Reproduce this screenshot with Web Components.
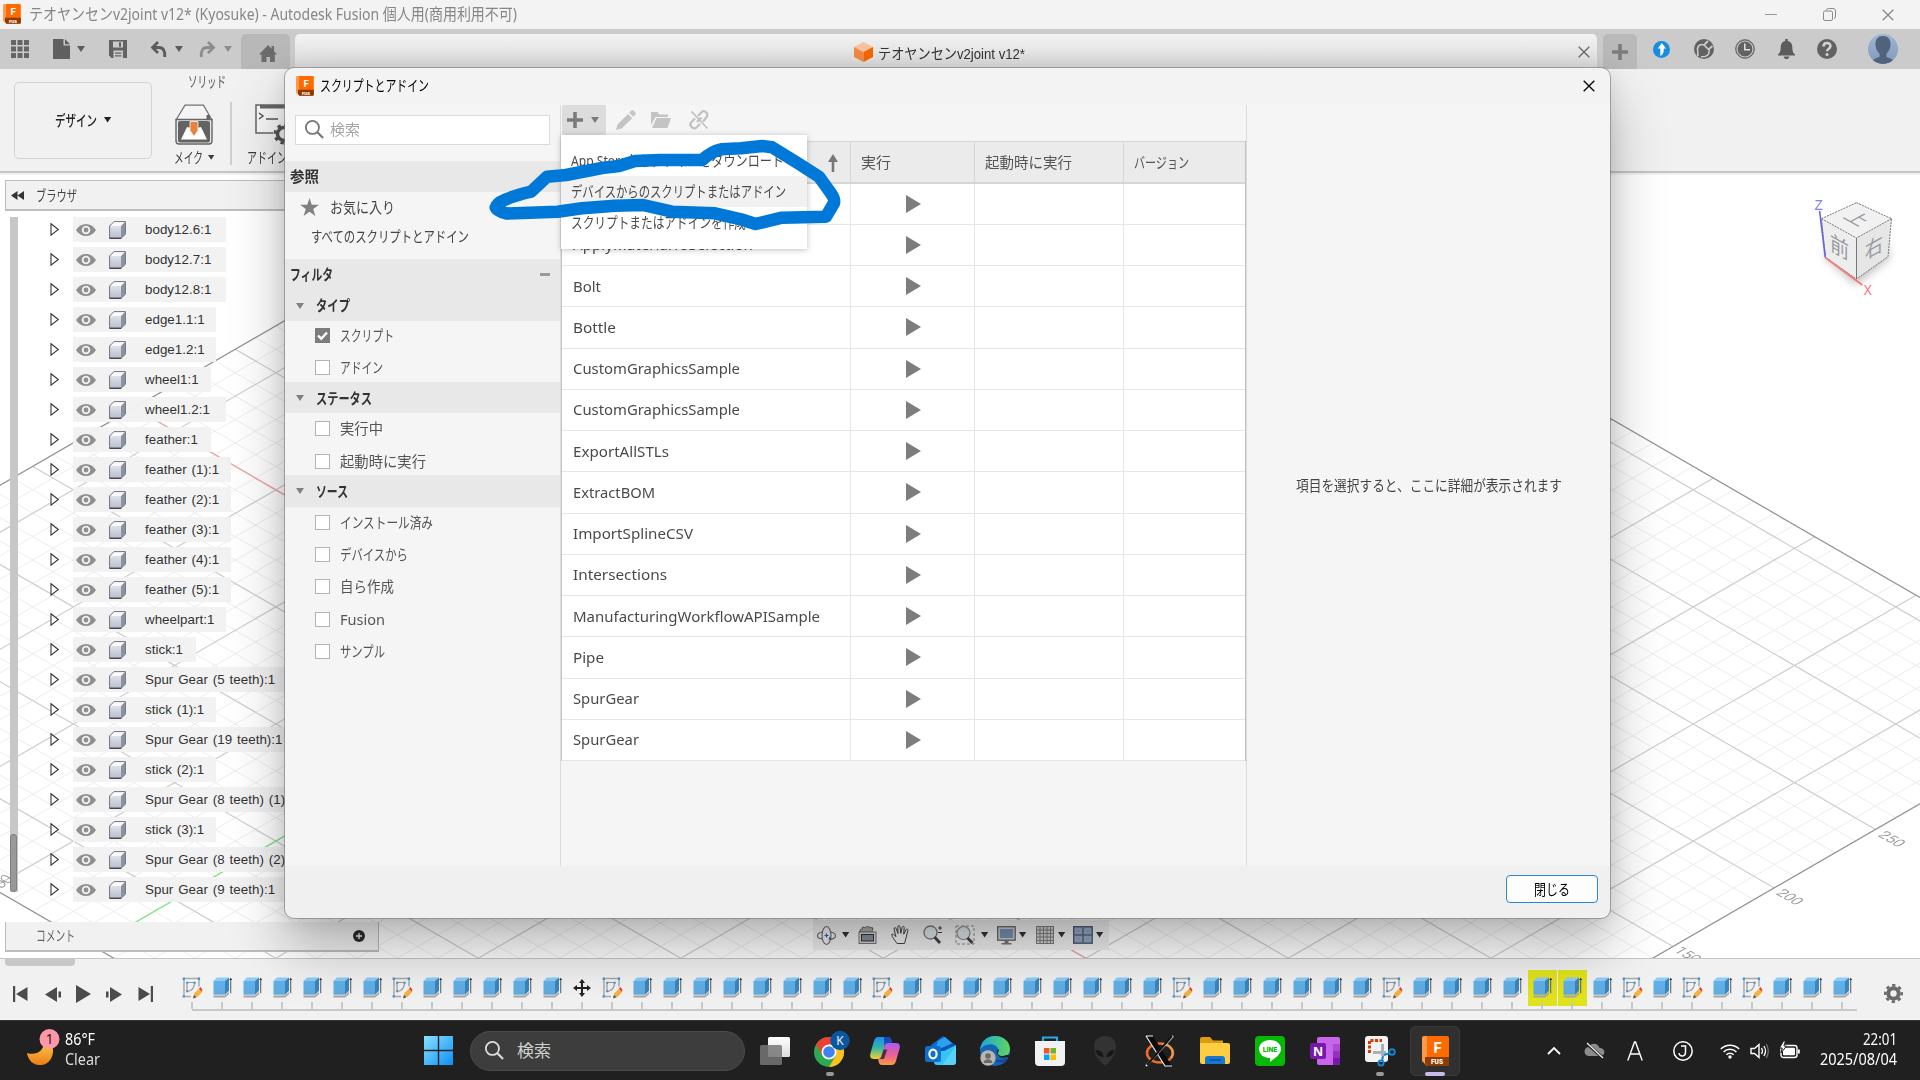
<!DOCTYPE html>
<html lang="ja">
<head>
<meta charset="utf-8">
<title>Fusion</title>
<style>
html,body{margin:0;padding:0;width:1920px;height:1080px;overflow:hidden;background:#fff}
body{font-family:"Noto Sans","Noto Sans CJK JP",sans-serif;font-size:15px;line-height:1;color:#3c3c3c}
</style>
</head>
<body>
<fusion-app></fusion-app>
<script>
const K = 0.5783;
const base = '*{box-sizing:border-box}:host{display:block}';
function define(name, css, html, after) {
  customElements.define(name, class extends HTMLElement {
    connectedCallback() {
      if (this.shadowRoot) return;
      const r = this.attachShadow({mode: 'open'});
      r.innerHTML = '<style>' + base + css + '</style>' + (typeof html === 'function' ? html(this) : html);
      if (after) after(this, r);
    }
  });
}

/* Label squeezed or stretched horizontally to the width in its "w" attribute. */
define('ui-label', ':host{display:inline-block;white-space:nowrap;flex:none}span{display:inline-block;transform-origin:0 50%}',
  '<span><slot></slot></span>', (el, r) => {
    const w = +el.getAttribute('w'), s = r.querySelector('span');
    if (!w) return;
    const n = s.getBoundingClientRect().width;
    el.style.width = w + 'px';
    if (n) s.style.transform = 'scaleX(' + (w / n) + ')';
  });

const fusion = `<defs><linearGradient id="f" x2="1"><stop offset="0" stop-color="#ff9a4a"/><stop offset=".17" stop-color="#ff9a4a"/><stop offset=".17" stop-color="#ff6b00"/></linearGradient></defs>`;
const I = {
  fusion: [27, 30, fusion + `<path d="M2 0h23a2 2 0 0 1 2 2v26a2 2 0 0 1-2 2H5L0 25V2a2 2 0 0 1 2-2z" fill="url(#f)"/><path d="M3 21h24v7a2 2 0 0 1-2 2H5l-2-3z" fill="#8f3a00"/><text x="15.5" y="16.5" text-anchor="middle" font-family="Roboto" font-weight="700" font-size="15" fill="#fff">F</text><text x="15" y="28.2" text-anchor="middle" font-family="Roboto" font-weight="900" font-size="6.6" fill="#fff">FUS</text>`],
  grid: [18, 18, [0,6.5,13].map(x=>[0,6.5,13].map(y=>`<rect x="${x}" y="${y}" width="5" height="5" fill="#666"/>`).join('')).join('')],
  file: [17, 20, `<path d="M0 0h10.5v6.500H17V20H0z" fill="#5f5f5f"/><path d="M12 0l5 5.200h-5z" fill="#5f5f5f"/>`],
  caret: [8, 6, `<path d="M0 0h8L4 6z" fill="currentColor"/>`],
  save: [18, 18, `<path d="M0 0h18v18H2.500L0 15.500z" fill="#636363"/><path d="M4 1.500h10v6H4zM4.500 10.500h9.500V18H4.500z" fill="#cbcbcb"/><path d="M10 2.200h2v4.500h-2zM6 12.500h6.500v1.300H6zM6 15.200h6.500v1.300H6z" fill="#636363"/>`],
  undo: [16, 17, `<path d="M7 1L1.500 6.500 7 12M2 6.500h6c4.500 0 6 3.500 5.800 9.500" fill="none" stroke="currentColor" stroke-width="2.800"/>`],
  redo: [16, 17, `<path d="M9 1l5.500 5.500L9 12M14 6.500H8c-4.500 0-6 3.500-5.800 9.500" fill="none" stroke="currentColor" stroke-width="2.800"/>`],
  home: [18, 17, `<path d="M9 0l3.500 3.500V1H15v5l3 3.500h-2.200V17H11v-5H7.500v5H2.500V9.500H0z" fill="#6c6c6c"/>`],
  dcube: [19, 20, `<path d="M9.500 0L19 5 9.500 10 0 5z" fill="#f9c3a0"/><path d="M0 5l9.500 5v10L0 15z" fill="#f38a44"/><path d="M19 5l-9.500 5v10L19 15z" fill="#f56600"/>`],
  x: [12, 12, `<path d="M.7.700l10.600 10.600M11.300.700L.7 11.300" stroke="currentColor" stroke-width="1.300" fill="none"/>`],
  min: [12, 12, `<path d="M0 5.500h12" stroke="#999" stroke-width="1"/>`],
  max: [13, 13, `<rect x=".5" y="3" width="9" height="9.500" rx="1.500" fill="none" stroke="#8a8a8a"/><path d="M3.500 2.500a2 2 0 0 1 2-2h4.500a2.500 2.500 0 0 1 2.500 2.500V9a2 2 0 0 1-1.500 1.500" fill="none" stroke="#8a8a8a"/>`],
  plus: [16, 16, `<path d="M6.200 0h3.600v6.200H16v3.600H9.800V16H6.200V9.800H0V6.200h6.200z" fill="currentColor"/>`],
  up: [17, 17, `<circle cx="8.500" cy="8.500" r="8.500" fill="#148de3"/><path d="M8.800 2L13 7.500h-2.300c.3 3.500-.5 6-3.200 7.500-.5-2 .1-4.500-.2-7.500H4.800z" fill="#fff"/>`],
  ext: [20, 20, `<circle cx="10" cy="10" r="10" fill="#626262"/><path d="M4 17L3.500 9.500C4 6.500 7 4.500 10 6l5 5c.8 3-1 6-4 6.500l-4 .3" fill="none" stroke="#cbcbcb" stroke-width="1.600"/><path d="M10.500 5.500L14 2M14.500 10.500L18.500 7" stroke="#cbcbcb" stroke-width="1.800"/><path d="M9.500 7.500l5 4.500-3.500 3.500z" fill="#626262"/>`],
  clock: [20, 20, `<circle cx="10" cy="10" r="9.300" fill="#626262" stroke="#626262"/><circle cx="10" cy="10" r="8" fill="none" stroke="#cbcbcb" stroke-width="1.200"/><path d="M9.800 4.500v6.200H15" fill="none" stroke="#e2e2e2" stroke-width="1.500"/>`],
  bell: [17, 20, `<path d="M7.200 0h2.600v2c3 .6 4.500 3 4.500 6 0 4 .8 6 2.700 7.500v1H0v-1C1.900 14 2.700 12 2.700 8c0-3 1.500-5.400 4.500-6zM5.500 17.500h6L10 20H7z" fill="#5c5c5c"/>`],
  help: [20, 20, `<circle cx="10" cy="10" r="10" fill="#626262"/><path d="M6.500 7.500c0-4.500 7-4.500 7-.4 0 2.600-3.400 2.500-3.400 5.200" fill="none" stroke="#d4d4d4" stroke-width="2.500"/><circle cx="10" cy="15.500" r="1.500" fill="#d4d4d4"/>`],
  avatar: [30, 30, `<defs><linearGradient id="a" y2="1" x2="0"><stop stop-color="#9fb5d3"/><stop offset="1" stop-color="#8299bd"/></linearGradient><clipPath id="c"><circle cx="15" cy="15" r="15"/></clipPath></defs><g clip-path="url(#c)"><rect width="30" height="30" fill="url(#a)"/><path d="M15 2c5 0 7.500 3 7.500 8s-2 7.500-4 9.500v3.500c4 1.500 6.500 2 7.500 5v4H4v-4c1-3 3.500-3.500 7.500-5v-3.500c-2-2-4-4.500-4-9.500s2.500-8 7.500-8z" fill="#51627b"/></g>`],
  make: [38, 41, `<path d="M1 16L10 1.200h18.500L37 16" fill="#f4f4f4" stroke="#707070" stroke-width="1.200"/><path d="M1 15.500h36V37a3 3 0 0 1-3 3H4a3 3 0 0 1-3-3z" fill="#e6e6e6" stroke="#666" stroke-width="1.400"/><rect x="3" y="17" width="32" height="21.500" rx="2" fill="#636363"/><path d="M6 35.500L12 23l4 1 3 4 3-4 4-1 6 12.500z" fill="#fff"/><path d="M15 17.500h8v9l-4 6-4-6z" fill="#e8833a" stroke="#fff" stroke-width=".8"/><rect x="31.500" y="11" width="3.500" height="4" fill="#666"/>`],
  addin: [44, 40, `<path d="M17 29H1V1h40v20" fill="#f7f7f7" stroke="#666" stroke-width="1.500"/><path d="M5 1h36v3.500H5z" fill="#666"/><path d="M4 9l4 3-4 3M11 15h12" fill="none" stroke="#555" stroke-width="1.500"/><path d="M15 29h3" stroke="#888" stroke-width="2"/><circle cx="29" cy="30" r="6.500" fill="none" stroke="#555" stroke-width="3.500"/><circle cx="29" cy="30" r="9" fill="none" stroke="#555" stroke-width="3" stroke-dasharray="3.500 3.570"/>`],
  rew: [13, 9, `<path d="M6.500 0v9L0 4.500zM13 0v9L6.500 4.500z" fill="#333"/>`],
  tri: [9, 13, `<path d="M1 .8L8.300 6.500 1 12.200z" fill="#fff" stroke="#333" stroke-width="1.100"/>`],
  eye: [20, 12, `<path d="M0 6C5-2 15-2 20 6 15 14 5 14 0 6z" fill="#8f8f8f"/><circle cx="10" cy="6" r="4.300" fill="#f1f1f1"/><circle cx="10" cy="6" r="2.400" fill="#909090"/>`],
  body: [17, 18, `<defs><linearGradient id="b" y2="1" x2="0"><stop stop-color="#dde1ea"/><stop offset="1" stop-color="#b9bfce"/></linearGradient></defs><path d="M.6 5L5 .6h11.400v12.600L12 17.300H.6z" fill="#8b93a3"/><path d="M.6 5L5 .6h11.400L12 5z" fill="#fbfbfc"/><path d="M.6 5H12v12H.6z" fill="url(#b)"/><path d="M.6 5v12.300H12l4.400-4.100V.6H5z" fill="none" stroke="#72757d" stroke-width="1"/><path d="M.6 17.300h11.600" stroke="#42444a" stroke-width="1.300"/>`],
  cplus: [12, 12, `<circle cx="6" cy="6" r="6" fill="#2e2e2e"/><path d="M6 3v6M3 6h6" stroke="#eee" stroke-width="1.300"/>`],
  first: [15, 16, `<path d="M0 0h2.200v16H0zM14.500 1v14L3 8z" fill="#4b4b4b"/>`],
  prev: [16, 15, `<path d="M12 0v15L0 7.500zM13.500 4.500H16v6h-2.500z" fill="#4b4b4b"/>`],
  play: [15, 18, `<path d="M0 0l15 9-15 9z" fill="#4b4b4b"/>`],
  next: [16, 15, `<path d="M4 0v15l12-7.500zM0 4.500h2.500v6H0z" fill="#4b4b4b"/>`],
  last: [15, 16, `<path d="M12.800 0H15v16h-2.200zM.5 1v14L12 8z" fill="#4b4b4b"/>`],
  extrude: [19, 21, `<defs><linearGradient id="e" y2="1" x2="0"><stop stop-color="#5fb1ea"/><stop offset="1" stop-color="#62aade"/></linearGradient></defs><path d="M.5 18.500h11.500l4-3.500v2.200l-4 3.300H.5z" fill="#a5a5a5"/><path d="M.5 4L4 .5h12L12 4z" fill="#8dcbf8"/><path d="M.5 4H12v13.700H.5z" fill="url(#e)"/><path d="M12 4L16 .5v13.200l-4 4z" fill="#3a86bf"/><path d="M17.700 2.500v13.800" stroke="#666" stroke-width="1.100"/><path d="M16.200 3L17.700.8 19.200 3z" fill="#333"/>`],
  sketch: [20, 22, `<path d="M2 1.500h15v8M2 1.500v18h7" fill="none" stroke="#a9a9a9" stroke-width="1.500"/><path d="M5 5.500h7.500C12.500 10 11 13.500 5.500 14.500M5 5.500v9" fill="none" stroke="#999" stroke-width="1.200"/><g fill="#3f96da"><path d="M.6.600h2.300v2.300H.6zM15.800.600h2.300v2.300h-2.300zM.6 18.300h2.300v2.300H.6zM4.200 4.700h2v2h-2zM11.700 4.700h2v2h-2zM4.200 13.200h2v2h-2z"/></g><path d="M11 21l1.500-5 5-4.500 3 3-4.500 5z" fill="#f5b141"/><path d="M17 11.500l1.500-1.500 2 3-1 1.500z" fill="#e63946"/><path d="M11 21.500l1-3.500 2.500 2.300z" fill="#555"/>`],
  move: [18, 18, `<path d="M9 0l3 4h-2v4h4V6l4 3-4 3v-2h-4v4h2l-3 4-3-4h2v-4H4v2L0 9l4-3v2h4V4H6z" fill="#222"/>`],
  gear: [19, 19, `<circle cx="9.500" cy="9.500" r="5.200" fill="none" stroke="#6b6b6b" stroke-width="4"/><circle cx="9.500" cy="9.500" r="8.200" fill="none" stroke="#6b6b6b" stroke-width="2.600" stroke-dasharray="3.300 3.140" stroke-dashoffset="1.600"/>`],
  orbit: [19, 19, `<ellipse cx="9.500" cy="9.500" rx="4.500" ry="9" fill="none" stroke="#666" stroke-width="1.100"/><path d="M5 6C-1 7.500-1 12 5 13M14 6c6 1.500 6 6 0 7.200" fill="none" stroke="#666" stroke-width="1.100"/><path d="M12.500 10.500l-1 3 3.500.5z" fill="#555"/><path d="M9.500 7.500v4M7.500 9.500h4" stroke="#1d62d0" stroke-width="1.200"/>`],
  look: [19, 18, `<path d="M1.500 6l1-2.500L4 3l.5-2 3 .5 1-1L15 2l-1 4z" fill="#aaa" stroke="#666"/><rect x="1" y="6" width="17" height="11.500" fill="#d5d5d5" stroke="#777"/><rect x="3.500" y="8.500" width="12" height="6.500" fill="#8490a0" stroke="#333"/>`],
  hand: [19, 20, `<path d="M6 18.500C4 15.500 1 12 .7 9.500c.8-1 2.300-.2 4.200 2.200L3 3.800c0-1.600 1.700-1.600 2.200 0L7 8.500 6.800 1.800c.2-1.600 2-1.600 2.200 0l.8 6.500 1.400-6c.6-1.500 2.100-1.200 2 .4l-.5 6.500 2.200-4.500c.9-1.200 2.300-.5 1.900.9-1 4-1.800 8.400-3.300 12.900z" fill="#f2f2f2" stroke="#444" stroke-width="1"/>`],
  zoom: [20, 20, `<circle cx="7.500" cy="7.500" r="6.500" fill="#dfe7e9" stroke="#777" stroke-width="1.300"/><path d="M11.500 12l5.500 6" stroke="#444" stroke-width="3"/><path d="M15 3h4M17 1v4M15 7.500h4" stroke="#444"/>`],
  zoomw: [21, 21, `<rect x="1" y="1" width="18" height="18" fill="none" stroke="#888" stroke-dasharray="3 2"/><circle cx="8.500" cy="8" r="6.500" fill="#dfe7e9" stroke="#888" stroke-width="1.200"/><path d="M12.500 13l5 5" stroke="#444" stroke-width="3"/>`],
  monitor: [19, 19, `<rect x=".7" y=".7" width="17.500" height="13.500" fill="#ccc" stroke="#666" stroke-width="1.300"/><rect x="3" y="3" width="13" height="9" fill="#7791b3"/><path d="M7.500 14.500h4V17h3v1.500h-10V17h3z" fill="#777"/>`],
  gridv: [18, 18, `<rect width="18" height="18" fill="#d0d0d0"/><path d="M.5 0v18M4 0v18M7.500 0v18M11 0v18M14.500 0v18M17.500 0v18M0 .5h18M0 4h18M0 7.500h18M0 11h18M0 14.500h18M0 17.500h18" stroke="#777" stroke-width=".9"/>`],
  views: [20, 18, `<rect x=".7" y=".7" width="18.500" height="16.500" fill="#8ba0bd" stroke="#4e5a70" stroke-width="1.400"/><path d="M10 0v18M0 9h20" stroke="#5e6a80" stroke-width="1.500"/><path d="M2.500 3h5.500v4H2.500zM12 3h5.500v4H12zM2.500 11h5.500v4H2.500zM12 11h5.500v4H12z" fill="none" stroke="#a5b6d0" stroke-width=".8"/>`],
  search: [20, 20, `<circle cx="7.800" cy="7.800" r="6.900" fill="none" stroke="currentColor" stroke-width="1.900"/><path d="M13 13l6 6" stroke="currentColor" stroke-width="2.300"/>`],
  star: [19, 18, `<path d="M9.500 0l2.300 6.800H19l-5.800 4.300 2.200 6.900-5.900-4.200L3.600 18l2.200-6.900L0 6.800h7.200z" fill="#808080"/>`],
  pencil: [20, 20, `<path d="M0 20l1.600-5.600L12 4l4.200 4.200L5.600 18.500zM13.200 2.800L15.400.6q1-1 2 0l2 2q1 1 0 2l-2 2.200z" fill="#c4c4c4"/>`],
  folder: [20, 16, `<path d="M0 0h6.500l2 2.500H17V5H4.500L0 13z" fill="#c4c4c4"/><path d="M5.500 6H20l-3.500 10H1z" fill="#c4c4c4"/>`],
  unlink: [20, 20, `<g fill="none" stroke="#c0c0c0" stroke-width="2.200"><path d="M9 6l3.500-3.800c3-2.700 7.700 1.500 5 5L14 11.500M6 8.500L2.300 12.300c-2.800 3 1.800 8 5.200 5.200l3.500-3.800M8 12l4.500-4.500"/></g><path d="M2.500 1.500l16 17" stroke="#c0c0c0" stroke-width="1.700"/>`],
  arrow: [10, 18, `<path d="M5 0l5 8H6.300v10H3.700V8H0z" fill="#777"/>`],
  run: [15, 18, `<path d="M0 0l15 9-15 9z" fill="#7d7d7d"/>`],
  check: [15, 15, `<rect width="15" height="15" fill="#7c7c7c"/><path d="M3 7.500l3.200 3.200L12 4.500" fill="none" stroke="#fff" stroke-width="2.400"/>`],
  box: [15, 15, `<rect x=".5" y=".5" width="14" height="14" fill="#fff" stroke="#b3b3b3"/>`],
  moon: [34, 38, `<defs><linearGradient id="m" y2="1" x2="0"><stop stop-color="#fcd34a"/><stop offset="1" stop-color="#ee7b17"/></linearGradient></defs><path d="M22 11C31 22 24 37 12 36 6 36 1 31 0 24c9 3 18-2 17-13z" fill="url(#m)"/><circle cx="22.500" cy="10" r="10" fill="#ff98a6"/><text x="22.500" y="14.800" text-anchor="middle" font-family="Noto Sans" font-size="13.500" fill="#1c1c1c">1</text>`],
  win: [29, 29, `<defs><linearGradient id="w" x2="1" y2="1"><stop stop-color="#8be0ff"/><stop offset="1" stop-color="#0a91f5"/></linearGradient></defs><path d="M0 0h13.800v13.800H0zM15.200 0H29v13.800H15.200zM0 15.200h13.800V29H0zM15.200 15.200H29V29H15.200z" fill="url(#w)"/>`],
  task: [30, 28, `<defs><linearGradient id="t" y2="1" x2="0"><stop stop-color="#fff"/><stop offset="1" stop-color="#ddd"/></linearGradient></defs><rect x="8" width="22" height="20" rx="1.500" fill="url(#t)"/><rect y="8" width="22" height="20" rx="1.500" fill="#777" opacity=".85"/>`],
  chrome: [32, 36, `<g transform="translate(0 4)"><circle cx="15" cy="15" r="15" fill="#2da94f"/><path d="M15 15L2 7.500A15 15 0 0 1 28 7.500H15z" fill="#ea4335"/><path d="M15 30A15 15 0 0 0 28 7.500H15L21.500 19z" fill="#fcc31e"/><path d="M2 7.500L8.500 19 15 15z" fill="#ea4335"/><circle cx="15" cy="15" r="7.500" fill="#fff"/><circle cx="15" cy="15" r="5.800" fill="#3f83f1"/></g><circle cx="26" cy="7.500" r="9.700" fill="#0b579f"/><text x="26" y="12" text-anchor="middle" font-family="Noto Sans" font-size="12" fill="#e8eef6">K</text>`],
  copilot: [30, 28, `<defs><linearGradient id="p" y2="1" x2="0"><stop stop-color="#1d8bf0"/><stop offset=".5" stop-color="#35b8a6"/><stop offset="1" stop-color="#f6d02e"/></linearGradient><linearGradient id="q" y2="1" x2="0"><stop stop-color="#a75cf0"/><stop offset=".55" stop-color="#ec5f98"/><stop offset="1" stop-color="#fb9b3c"/></linearGradient></defs><path d="M8 0h10q2.500 0 3.200 2.500L22 6h-4q-2 0-2.700 2l-4 12q-.8 2-3 2H4C0 22-.3 19 .5 16L4 4Q5.200 0 8 0z" fill="url(#p)"/><path d="M14 0h4.500q2 0 2.700 2.500L22.300 6H18q-2 0-2.700 2l-.8 2z" fill="#1749b8"/><path d="M22 28H12q-2.500 0-3.200-2.500L8 22q2.500 0 3.300-2.200L15 8q.7-2 3-2h8c4 0 4.300 3 3.500 6L26 24q-1.200 4-4 4z" fill="url(#q)"/><path d="M13.500 12.500h3.700L14 22H9.500q1.200-.6 1.800-2.200z" fill="#202020" opacity=".75"/>`],
  outlook: [31, 30, `<path d="M6 9L18 0l12 9v4l-6 9-14-3z" fill="#1067c9"/><path d="M13 5L20 1l10 9-12 9-8-4z" fill="#2ba1ee"/><path d="M12 14L28 7l3 3-13 9z" fill="#0a55b3"/><path d="M11 15h8l12-6v17a3 3 0 0 1-3 3H12a3 3 0 0 1-3-3z" fill="#35c4f4"/><path d="M31 10v16a3 3 0 0 1-3 3H17z" fill="#6fdcf9" opacity=".6"/><rect y="10" width="16" height="16" rx="2.500" fill="#0f6fd0"/><ellipse cx="8" cy="18" rx="3.600" ry="4.300" fill="none" stroke="#fff" stroke-width="2.200"/>`],
  edge: [30, 30, `<defs><linearGradient id="g" x2="1"><stop stop-color="#1ba5e2"/><stop offset="1" stop-color="#5fd65b"/></linearGradient></defs><circle cx="15" cy="15" r="15" fill="#1565b4"/><path d="M0 14C1 5 7 0 15 0c9 0 15 6 15 13 0 5-4 8-8 8-3 0-5-1-5-3 0-1 2-2 1-5C16 6 4 7 0 14z" fill="url(#g)"/><path d="M14 11c-5 5-1 13 5 13 4 0 8-2 10-4-1 2-3 5-5 7-4-1-7 0-10-3-4-4-4-10 0-13z" fill="#154b8c"/><path d="M19 13c0 3-2 4-1 5 1 2 5 3 8 1l4 0v4l-3-2c-5 2-9 0-10-3-1-2 0-4 2-5z" fill="#202020"/><circle cx="8" cy="22" r="7.700" fill="#b9b5b0"/><circle cx="8" cy="20" r="2.800" fill="#6b6865"/><path d="M3.500 27c0-5 9-5 9 0z" fill="#6b6865"/>`],
  store: [30, 30, `<path d="M8 7V1.500h14V7" fill="none" stroke="#28a8ea" stroke-width="2.200"/><path d="M0 5h30v21a4 4 0 0 1-4 4H4a4 4 0 0 1-4-4z" fill="#f2f2f2"/><path d="M9 12h5.500v5.500H9z" fill="#f35325"/><path d="M15.500 12H21v5.500h-5.500z" fill="#6fb52c"/><path d="M9 18.500h5.500V24H9z" fill="#05a6f0"/><path d="M15.500 18.500H21V24h-5.500z" fill="#ffba08"/>`],
  alien: [22, 30, `<path d="M11 0c7 0 11 4 11 11 0 8-6 15-11 19C6 26 0 19 0 11 0 4 4 0 11 0z" fill="#333"/><path d="M1.500 14c5 0 8 3 8 7-4 0-7-2-8-7zM20.500 14c-5 0-8 3-8 7 4 0 7-2 8-7z" fill="#161616"/>`],
  xapp: [30, 30, `<ellipse cx="15" cy="17" rx="13" ry="9.500" fill="none" stroke="#ef6a24" stroke-width="2.600"/><path d="M17 8c9 0 13 8 9 14" fill="none" stroke="#d9a35c" stroke-width="2"/><path d="M1 0h7l19 30h-7z" fill="#0c0c0c"/><path d="M1 0h7M1 0l19 30h7" fill="none" stroke="#eee" stroke-width="1.200"/><path d="M28 0L1 30" stroke="#eee" stroke-width="2"/><path d="M27 0L2 29" stroke="#111" stroke-width="2"/>`],
  explorer: [30, 27, `<path d="M0 2a2 2 0 0 1 2-2h8l3 3.500h10V8H0z" fill="#dd9b10"/><path d="M0 6h28a2 2 0 0 1 2 2v17a2 2 0 0 1-2 2H2a2 2 0 0 1-2-2z" fill="#ffcd41"/><path d="M5 27v-5a3 3 0 0 1 3-3h14a3 3 0 0 1 3 3v5z" fill="#1577cf"/><path d="M9 23h12" stroke="#0b4f97" stroke-width="1.500"/>`],
  line: [30, 30, `<rect width="30" height="30" rx="4" fill="#06b906"/><path d="M15 4c6.500 0 11 4 11 9 0 6-7 9.500-11 13v-4C8.500 22 4 18 4 13s4.500-9 11-9z" fill="#fff"/><text x="15" y="16" text-anchor="middle" font-family="Roboto" font-weight="900" font-size="6.800" fill="#06b906">LINE</text>`],
  note: [30, 28, `<rect x="7" width="23" height="28" rx="2" fill="#ca64ea"/><path d="M23 7h7v7h-7z" fill="#ae4bd5"/><path d="M23 14h7v7h-7z" fill="#9332bf"/><path d="M23 21h7v5a2 2 0 0 1-2 2h-5z" fill="#7719aa"/><rect y="6" width="16" height="16" rx="2" fill="#7719aa"/><text x="8" y="18.500" text-anchor="middle" font-family="Noto Sans" font-weight="700" font-size="12.500" fill="#fff">N</text>`],
  snip: [30, 30, `<rect width="23" height="26" rx="3" fill="#f3f3f3"/><path d="M4.500 17V4.500H17" fill="none" stroke="#d83b01" stroke-width="3" stroke-dasharray="3 1.500"/><path d="M17.500 8v12M8 16.500h13" stroke="#a9b2bb" stroke-width="3"/><path d="M19 19l6-2M18 20l-1 5" stroke="#1684ce" stroke-width="2"/><circle cx="27" cy="16" r="2.800" fill="none" stroke="#1684ce" stroke-width="2"/><circle cx="16" cy="27" r="2.600" fill="none" stroke="#1684ce" stroke-width="2"/>`],
  chev: [14, 8, `<path d="M1 7l6-6 6 6" fill="none" stroke="#fff" stroke-width="1.800"/>`],
  cloud: [21, 17, `<path d="M5 14a4.500 4.500 0 0 1 0-9C7 .5 14 .5 15.500 6 22 6 22 14 16 14z" fill="#8b8b8b"/><path d="M2 1l17 15" stroke="#202020" stroke-width="3"/><path d="M3 1l16 15" stroke="#eee" stroke-width="1.300"/>`],
  ime: [16, 20, `<path d="M.8 19.500L7.500 1h1l6.700 18.500M3.200 13h9.600" fill="none" stroke="#fff" stroke-width="1.400"/>`],
  jime: [20, 20, `<circle cx="10" cy="10" r="9.200" fill="none" stroke="#fff" stroke-width="1.500"/><path d="M8 5h4.500v6c0 5-6 5.500-6.500 1" fill="none" stroke="#fff" stroke-width="1.500"/>`],
  wifi: [20, 16, `<g fill="none" stroke="#fff" stroke-width="1.500"><path d="M.8 6a13 13 0 0 1 18.400 0M3.600 9a9 9 0 0 1 12.800 0M6.400 11.700a5 5 0 0 1 7.200 0"/></g><circle cx="10" cy="14" r="1.700" fill="#fff"/>`],
  vol: [19, 16, `<path d="M1 5.500h3.500L9 1.500v13l-4.500-4H1z" fill="none" stroke="#fff" stroke-width="1.400"/><path d="M11.500 5q2 3 0 6M13.800 3q3.500 5 0 10" fill="none" stroke="#fff" stroke-width="1.300"/><path d="M16.300 1q4 7 0 14" fill="none" stroke="#777" stroke-width="1.200"/>`],
  bat: [20, 17, `<rect x="1" y="3.500" width="16" height="12" rx="2.500" fill="none" stroke="#fff" stroke-width="1.400"/><rect x="3" y="5.700" width="12" height="7.600" rx="1" fill="#fff"/><path d="M18 7.500h1.800v4H18z" fill="#fff"/><path d="M3.500-1L-.5 6h2.800L1 11l5.500-7H3.900L5.500-1z" fill="#fff" stroke="#202020" stroke-width="1"/>`],
  minus: [10, 3, `<path d="M0 0h10v3H0z" fill="#999"/>`]
};
/* Icon: "n" names the drawing, "s" scales it, "g" is the gap to its left. */
define('ui-icon', ':host{display:block;flex:none}svg{display:block;overflow:visible}', el => {
  const [w, h, b] = I[el.getAttribute('n')], s = +(el.getAttribute('s') || 1);
  return `<style>:host{margin-left:${el.getAttribute('g') || 0}px}</style><svg width="${w*s}" height="${h*s}" viewBox="0 0 ${w} ${h}">${b}</svg>`;
});

define('title-bar', `:host{height:29px;background:#f3f3f3;display:flex;align-items:center;padding-left:3px;color:#868686;font-size:16px}
  ui-label{margin-left:8px;margin-top:-1px}.sp{flex:1}`,
  `<ui-icon n="fusion" s=".66" style="margin-top:-1px"></ui-icon><ui-label w="488">テオヤンセンv2joint v12* (Kyosuke) - Autodesk Fusion 個人用(商用利用不可)</ui-label>
   <div class="sp"></div><ui-icon n="min"></ui-icon><ui-icon n="max" g="46"></ui-icon><ui-icon n="x" g="46" style="color:#888"></ui-icon><div style="width:26px"></div>`);

define('quick-bar', `:host{height:40px;background:#cbcbcb;display:flex;align-items:center;color:#5c5c5c}
  .home{width:49px;height:35px;background:#b8b8b8;border-radius:5px 5px 0 0;align-self:flex-end;margin-left:9px;padding:11px 0 0 18px}
  .tab{width:1302px;height:35px;margin-left:5px;align-self:flex-end;border-radius:5px 5px 0 0;background:linear-gradient(#f3f3f3,#dadada);display:flex;align-items:center;color:#333}
  .add{width:34px;height:35px;margin-left:6px;align-self:flex-end;border-radius:5px 5px 0 0;background:#b9b9b9;display:flex;align-items:center;justify-content:center;color:#7c7c7c}`,
  `<ui-icon n="grid" g="11"></ui-icon><ui-icon n="file" g="24"></ui-icon><ui-icon n="caret" g="7"></ui-icon>
   <ui-icon n="save" g="24"></ui-icon><ui-icon n="undo" g="24"></ui-icon><ui-icon n="caret" g="8"></ui-icon>
   <ui-icon n="redo" g="16" style="color:#8d8d8d"></ui-icon><ui-icon n="caret" g="9" style="color:#8d8d8d"></ui-icon>
   <div class="home"><ui-icon n="home"></ui-icon></div>
   <div class="tab"><ui-icon n="dcube" g="559" style="margin-top:1px"></ui-icon><ui-label w="147" style="margin:3px 0 0 5px;font-family:'Liberation Sans','Noto Sans CJK JP',sans-serif">テオヤンセンv2joint v12*</ui-label><ui-icon n="x" g="553" style="color:#666"></ui-icon></div>
   <div class="add"><ui-icon n="plus"></ui-icon></div>
   <ui-icon n="up" g="16"></ui-icon><ui-icon n="ext" g="24"></ui-icon><ui-icon n="clock" g="21"></ui-icon><ui-icon n="bell" g="23"></ui-icon><ui-icon n="help" g="22"></ui-icon><ui-icon n="avatar" g="31"></ui-icon>`);

define('ribbon-bar', `:host{height:106px;background:#f1f1f1;display:flex;padding-left:14px;position:relative}
  :host::after{content:"";position:absolute;left:0;right:0;top:102px;height:1.500px;background:#c4c4c4}
  .ws{width:138px;height:77px;margin-top:12.500px;border:1.500px solid #d3d3d3;border-radius:5px;display:flex;align-items:center;justify-content:center;gap:7px;color:#222;font-weight:500}
  .g{display:flex;flex-direction:column;align-items:center;padding-top:5px;width:78px}
  .m{display:flex;align-items:center;gap:5px;margin-top:5px}.sep{width:1.500px;height:63px;background:#cfcfcf;margin-top:33px}
  .a{padding:35px 0 0 15px}`,
  `<div class="ws"><ui-label w="42" style="margin-left:1px">デザイン</ui-label><ui-icon n="caret" s=".9"></ui-icon></div>
   <div class="g"><ui-label w="38" style="margin-left:32px;color:#555">ソリッド</ui-label><ui-icon n="make" style="margin:15px 0 0 6px"></ui-icon><div class="m" style="margin-left:6px"><ui-label w="29">メイク</ui-label><ui-icon n="caret" s=".8"></ui-icon></div></div>
   <div class="sep"></div><div class="a"><ui-icon n="addin" g="8"></ui-icon><ui-label w="40" style="margin-top:6px">アドイン</ui-label></div>`);

/* Isometric ground grid, the four outer edges, the axes and the edge labels. */
function grid() {
  const U0 = 485.3, U1 = 1914, V0 = -512.8, V1 = 892.4, P = (u, v) => ((u - v) / 2 / K).toFixed(1) + ' ' + ((u + v) / 2 - 175).toFixed(1);
  let minor = '', bold = '';
  for (let i = -2; i < 61; i++) { const u = 532.2 + i * 23.42; if (u > U0 && u < U1) { const s = `M${P(u, V0)}L${P(u, V1)}`; i % 5 ? minor += s : bold += s; } }
  for (let i = 0; i < 60; i++) { const v = -489.4 + i * 23.42; if (v > V0 && v < V1) { const s = `M${P(U0, v)}L${P(U1, v)}`; i % 5 ? minor += s : bold += s; } }
  const t = (s, x, y) => `<text transform="matrix(.866 .5 -.866 .5 ${x} ${y})" font-family="Roboto" font-weight="300" font-size="14.500" fill="#777">${s}</text>`;
  return `<svg width="1920" height="783"><g fill="none"><path d="${minor}" stroke="#ececec"/><path d="${bold}" stroke="#cdcdcd" stroke-width="1.200"/>
   <path d="M${P(U0,330.3)}L${P(U1,330.3)}" stroke="#f7a3a3" stroke-width="1.300"/><path d="M${P(1000.6,V0)}L${P(1000.6,V1)}" stroke="#7dea7d" stroke-width="1.300"/>
   <path d="M${P(U0,V0)}L${P(U1,V0)}L${P(U1,V1)}L${P(U0,V1)}Z" stroke="#969696" stroke-width="1.300"/></g>
   <g>${t('250', 1877, 660.500)}${t('200', 1775, 718.500)}${t('150', 1673, 776)}</g>
   <g fill="none" stroke="#999"><ellipse cx="6" cy="704" rx="5" ry="2.800" transform="rotate(25 6 704)"/><ellipse cx="1" cy="709" rx="4" ry="2.800" transform="rotate(25 1 709)"/></g></svg>`;
}
define('view-cube', ':host{display:block;width:110px;height:110px}svg{overflow:visible;display:block}',
  `<svg width="110" height="110" viewBox="1800 190 110 110"><defs><filter id="s" x="-30%" y="-30%" width="160%" height="160%"><feGaussianBlur stdDeviation="4"/></filter></defs>
  <path d="M1824 257l32 28 34-27-5-20h-50z" fill="#999" opacity=".6" filter="url(#s)"/>
  <path d="M1856.500 202.700l35 16-35 19.300-35-19.300z" fill="#f1f1f1"/><path d="M1821.500 218.700l35 19.300v41l-31-21.500z" fill="#ededed"/><path d="M1891.500 218.700l-35 19.300v41l31.500-22.500z" fill="#e6e6e6"/>
  <path d="M1856.500 202.700l35 16-3.500 38-31.500 22.300-31-21.500-4-38.800zM1821.500 218.700l35 19.300 35-19.300" fill="none" stroke="#777" stroke-width="1" stroke-dasharray="2 1"/><path d="M1856.500 238v41" stroke="#777"/>
  <path d="M1819.600 211l5.700 46.500" stroke="#6363e0" stroke-width="1.600"/><path d="M1825.300 257.500l37 27.500" stroke="#ef7f7f" stroke-width="2"/>
  <g font-family="Noto Sans CJK JP" fill="#979ba3" text-anchor="middle"><text transform="matrix(.87 .48 -.87 .48 1851 222)" font-size="20">上</text><text transform="matrix(.87 .48 0 1 1839.500 255)" font-size="22">前</text><text transform="matrix(.87 -.48 0 1 1874 255)" font-size="21">右</text></g>
  <text transform="translate(1814.500 209.500) scale(.87 1)" font-family="Liberation Sans" font-size="15.500" fill="#7f7fff">Z</text><text transform="translate(1863.500 294.500) scale(.82 1)" font-family="Liberation Sans" font-size="15.500" fill="#ff7070">X</text></svg>`);

define('tree-row', `:host{display:flex;align-items:center;height:25px;margin-bottom:5px;font:13.333px "Liberation Sans",sans-serif;color:#333;word-spacing:1.100px;letter-spacing:.04px}
  .c{height:25px;background:rgba(241,241,241,.96);display:flex;align-items:center;margin-left:14px;padding-left:3px;width:var(--w);white-space:nowrap}.c span{margin-left:19px}`,
  el => `<ui-icon n="tri" g="23"></ui-icon><div class="c" style="--w:${el.getAttribute('w')}px"><ui-icon n="eye"></ui-icon><ui-icon n="body" g="13"></ui-icon><span><slot></slot></span></div>`);

const tree = [['body12.6:1',153],['body12.7:1',153],['body12.8:1',153],['edge1.1:1',143],['edge1.2:1',143],['wheel1:1',138],['wheel1.2:1',153],['feather:1',138],['feather (1):1',158],['feather (2):1',158],['feather (3):1',158],['feather (4):1',158],['feather (5):1',158],['wheelpart:1',153],['stick:1',123],['Spur Gear (5 teeth):1',214],['stick (1):1',143],['Spur Gear (19 teeth):1',222],['stick (2):1',143],['Spur Gear (8 teeth) (1):1',240],['stick (3):1',143],['Spur Gear (8 teeth) (2):1',240],['Spur Gear (9 teeth):1',214]];
define('browser-panel', `:host{width:374px;height:776px;display:flex;flex-direction:column}
  header{height:30.500px;flex:none;border:1.500px solid #bdbdbd;border-bottom-width:2px;background:#f1f1f1;display:flex;align-items:center;padding-left:5px;color:#444}
  .b{display:flex;height:711px;flex:none;padding-top:6.500px}.track{width:8px;height:675px;margin-left:5px;background:#c5c7c8;display:flex;align-items:flex-end}
  .thumb{width:7px;height:58px;background:#999;border:1px solid #808080;border-radius:3px}
  footer{height:30.500px;flex:none;background:#f1f1f1;border:solid #bdbdbd;border-width:0 1.500px 2px;display:flex;align-items:center;padding-left:30px;color:#666}`,
  `<header><ui-icon n="rew" style="margin-top:2px"></ui-icon><ui-label w="41" style="margin:1px 0 0 12px">ブラウザ</ui-label></header>
   <div class="b"><div class="track"><div class="thumb"></div></div><div style="margin-left:9px">${tree.map(t => `<tree-row w="${t[1]}">${t[0]}</tree-row>`).join('')}</div></div>
   <footer><ui-label w="39">コメント</ui-label><ui-icon n="cplus" g="278"></ui-icon></footer>`);

define('nav-bar', ':host{width:296px;height:30px;background:#f0f0f0;display:flex;align-items:center;color:#333}',
  `<ui-icon n="orbit" g="4"></ui-icon><ui-icon n="caret" g="6" s=".9"></ui-icon><ui-icon n="look" g="9"></ui-icon><ui-icon n="hand" g="14"></ui-icon><ui-icon n="zoom" g="13"></ui-icon><ui-icon n="zoomw" g="12"></ui-icon><ui-icon n="caret" g="5" s=".9"></ui-icon><ui-icon n="monitor" g="9"></ui-icon><ui-icon n="caret" g="3" s=".9"></ui-icon><ui-icon n="gridv" g="9"></ui-icon><ui-icon n="caret" g="4" s=".9"></ui-icon><ui-icon n="views" g="8"></ui-icon><ui-icon n="caret" g="3" s=".9"></ui-icon>`);

define('model-canvas', `:host{height:783px;position:relative;overflow:hidden;background:#fff}svg{display:block}
  browser-panel{position:absolute;left:5px;top:5px}nav-bar{position:absolute;left:813px;top:745px}view-cube{position:absolute;left:1800px;top:15px}`,
  () => grid() + '<browser-panel></browser-panel><nav-bar></nav-bar><view-cube></view-cube>');

define('time-line', `:host{height:62px;background:#f1f1f1;border-top:1.500px solid #c6c6c6;display:flex;position:relative}
  .sc{position:absolute;left:5px;top:0;width:70px;height:7px;background:#c8c8c8;border-radius:0 0 4px 4px}
  .pl{display:flex;align-items:center;width:177px;padding:9px 0 0 13px}.it{display:flex}
  .i{width:30px;height:52px;display:flex;flex-direction:column;align-items:center;border-bottom:2px solid #c8c8c8}
  .i>div{height:36px;width:29px;margin:10.500px 0 -4px;display:flex;align-items:center;justify-content:center;flex:none}
  .i>div.y{background:#e1e31c}.i b{width:2.500px;height:8px;background:#c8c8c8;margin-top:auto}
  .i:first-child{border-image:linear-gradient(90deg,transparent 50%,#c8c8c8 50%) 2}`,
  () => {
    const sk = [0, 7, 14, 23, 33, 40, 48, 50, 52]; let s = '';
    for (let i = 0; i < 56; i++) { const n = i === 13 ? 'move' : sk.includes(i) ? 'sketch' : 'extrude'; s += `<div class="i"><div ${i === 45 || i === 46 ? 'class="y"' : ''}><ui-icon n="${n}" g="${n === 'extrude' ? 1 : 0}"></ui-icon></div><b></b></div>`; }
    return `<div class="sc"></div><div class="pl"><ui-icon n="first"></ui-icon><ui-icon n="prev" g="17"></ui-icon><ui-icon n="play" g="15"></ui-icon><ui-icon n="next" g="15"></ui-icon><ui-icon n="last" g="16"></ui-icon></div><div class="it">${s}</div><ui-icon n="gear" g="27" style="margin-top:25px"></ui-icon>`;
  });

define('task-app', `:host{width:55px;height:60px;display:flex;align-items:center;justify-content:center;position:relative}
  .a{width:50px;height:50px;border-radius:5px;display:flex;align-items:center;justify-content:center}
  :host([active]) .a{background:#303030;border:1px solid #3a3a3a}i{position:absolute;top:51px;height:4px;border-radius:2px;background:#989898;width:8px}
  :host([active]) i{width:20px;background:#c9bbe9}`,
  el => `<div class="a"><ui-icon n="${el.getAttribute('n')}"></ui-icon></div>${el.hasAttribute('run') ? '<i></i>' : ''}`);

define('task-bar', `:host{height:60px;background:#202020;border-top:1px solid #333;display:flex;align-items:center;color:#fff;font-size:15.500px;overflow:hidden}
  .w{width:397px;display:flex;align-items:center;padding-left:27px;gap:4px}.w div,.ck{display:flex;flex-direction:column;gap:5px;margin-top:-2px}
  .s{width:275px;height:40px;border-radius:20px;background:#3d3d3d;border:1px solid #4b4b4b;margin-left:17px;display:flex;align-items:center;color:#cfcfcf;padding-left:14px;font-size:17px;margin-right:2.500px}
  .ck{align-items:flex-end;margin-left:20px}`,
  `<div class="w"><ui-icon n="moon" style="margin-top:-5px"></ui-icon><div><ui-label w="30">86°F</ui-label><ui-label w="35" style="color:#ddd">Clear</ui-label></div></div><ui-icon n="win" g="27"></ui-icon>
   <div class="s"><ui-icon n="search" s=".95" style="color:#ddd"></ui-icon><ui-label w="34" style="margin-left:13px">検索</ui-label></div>
   ${['task','chrome*','copilot','outlook','edge','store','alien','xapp','explorer','line','note','snip*'].map(n => `<task-app n="${n.replace('*','')}"${n.includes('*') ? ' run' : ''}></task-app>`).join('')}<task-app n="fusion" run active></task-app>
   <ui-icon n="chev" g="84"></ui-icon><ui-icon n="cloud" g="23"></ui-icon><ui-icon n="ime" g="22"></ui-icon><ui-icon n="jime" g="30"></ui-icon><ui-icon n="wifi" g="27"></ui-icon><ui-icon n="vol" g="10"></ui-icon><ui-icon n="bat" g="11"></ui-icon>
   <div class="ck"><ui-label w="34">22:01</ui-label><ui-label w="77">2025/08/04</ui-label></div>`);

define('filter-head', `:host{display:flex;align-items:center;height:31px;background:#e8e8e8;font-weight:600;color:#333;padding-left:5px}ui-icon{color:#808080;margin-right:12px}`,
  el => `${el.hasAttribute('fold') ? '<ui-icon n="caret" g="6"></ui-icon>' : ''}<slot></slot>`);
define('check-item', `:host{display:flex;align-items:center;height:32.400px;padding-left:30px;color:#555}ui-label{margin-left:10px}`,
  el => `<ui-icon n="${el.hasAttribute('on') ? 'check' : 'box'}"></ui-icon><ui-label w="${el.getAttribute('w')}">${el.textContent}</ui-label>`);
define('filter-pane', `:host{width:276px;border-right:1.500px solid #dcdcdc;background:#f5f5f5}
  .s{margin:10px 0 16px 10px;width:255px;height:30px;background:#fff;border:1.500px solid #d9d9d9;display:flex;align-items:center;padding:0 0 1px 9px;color:#a5a5a5}
  .r{height:30px;display:flex;align-items:center;color:#444}.g{height:63px}`,
  `<div class="s"><ui-icon n="search" s=".95" style="color:#777"></ui-icon><ui-label w="30" style="margin-left:6px">検索</ui-label></div>
   <filter-head><ui-label w="29">参照</ui-label></filter-head>
   <div class="r"><ui-icon n="star" g="15"></ui-icon><ui-label w="65" style="margin-left:11px">お気に入り</ui-label></div>
   <div class="r" style="height:37px;padding:0 0 8px 26px"><ui-label w="158">すべてのスクリプトとアドイン</ui-label></div>
   <filter-head><ui-label w="43">フィルタ</ui-label><ui-icon n="minus" g="207"></ui-icon></filter-head>
   <filter-head fold><ui-label w="34">タイプ</ui-label></filter-head>
   <div class="g"><check-item on w="54" style="margin-top:-1.800px">スクリプト</check-item><check-item w="43">アドイン</check-item></div>
   <filter-head fold style="padding-top:1px"><ui-label w="56">ステータス</ui-label></filter-head>
   <div class="g" style="height:62px"><check-item w="43" style="margin-top:-.6px">実行中</check-item><check-item w="86">起動時に実行</check-item></div>
   <filter-head fold style="height:32px;padding-top:1px"><ui-label w="32">ソース</ui-label></filter-head>
   <div class="g"><check-item w="93" style="margin-top:-.8px">インストール済み</check-item><check-item w="68">デバイスから</check-item><check-item w="54">自ら作成</check-item><check-item w="45">Fusion</check-item><check-item w="45">サンプル</check-item></div>`);

define('script-row', `:host{display:grid;grid-template-columns:289px 124px 148.500px 1fr;height:41.250px;background:#fff;border-bottom:1.200px solid #e6e6e6;color:#4a4a4a}
  div{display:flex;align-items:center;padding-left:11px;border-right:1.200px solid #e6e6e6}div:last-child{border:0}`,
  el => `<div><ui-label w="${el.getAttribute('w')}">${el.textContent}</ui-label></div><div style="padding-left:54.500px"><ui-icon n="run"></ui-icon></div><div></div><div></div>`);
const rows = [['',0],['ApplyMaterialToSelection',180],['Bolt',28],['Bottle',43],['CustomGraphicsSample',167],['CustomGraphicsSample',167],['ExportAllSTLs',96],['ExtractBOM',82],['ImportSplineCSV',120],['Intersections',94],['ManufacturingWorkflowAPISample',247],['Pipe',31],['SpurGear',66],['SpurGear',66]];
define('add-menu', `:host{width:246px;height:114px;background:#fff;box-shadow:0 1px 6px rgba(0,0,0,.25);padding-top:10px;color:#4a4a4a}
  div{height:31px;display:flex;align-items:center;padding-left:10px}.h{background:#f1f1f1}`,
  `<div><ui-label w="213">App Storeからアドインをダウンロード</ui-label></div><div class="h"><ui-label w="215">デバイスからのスクリプトまたはアドイン</ui-label></div><div><ui-label w="175">スクリプトまたはアドインを作成</ui-label></div>`);
define('script-table', `:host{width:686px;border-right:1.500px solid #dcdcdc;position:relative}
  .t{height:36px;display:flex}.p{width:43.500px;height:30px;margin-left:1px;background:#dcdcdc;border-radius:2px;display:flex;align-items:center;color:#7a7a7a;padding-left:5px}
  .t>ui-icon{margin-top:5px}
  .h{display:grid;grid-template-columns:289px 124px 148.500px 1fr;height:42.500px;background:#ebebeb;border-top:1.200px solid #d6d6d6;border-bottom:2px solid #d6d6d6;color:#555}
  .h div{display:flex;align-items:center;padding:2px 0 0 10px;border-right:1.200px solid #d6d6d6}.h div:last-child{border:0}
  .tb{border-left:1.200px solid #c6c6c6;border-right:1.200px solid #c0c0c0;width:685px}add-menu{position:absolute;left:0;top:30px}`,
  `<div class="t"><div class="p"><ui-icon n="plus"></ui-icon><ui-icon n="caret" g="8"></ui-icon></div><ui-icon n="pencil" g="10"></ui-icon><ui-icon n="folder" g="15" style="margin-top:7px"></ui-icon><ui-icon n="unlink" g="18"></ui-icon></div>
   <div class="tb"><div class="h"><div><ui-icon n="arrow" g="255.500"></ui-icon></div><div><ui-label w="30">実行</ui-label></div><div><ui-label w="87">起動時に実行</ui-label></div><div><ui-label w="55">バージョン</ui-label></div></div>
   ${rows.map(r => `<script-row w="${r[1]}">${r[0]}</script-row>`).join('')}</div><add-menu></add-menu>`);

define('script-dialog', `:host{width:1325px;height:850px;background:#f5f5f5;border-radius:9px;outline:1px solid rgba(120,120,120,.6);box-shadow:0 30px 56px rgba(0,0,0,.28),0 2px 20px rgba(0,0,0,.1);display:flex;flex-direction:column;overflow:hidden}
  header{height:37px;background:#f3f3f3;display:flex;align-items:center;padding:0 0 1.500px 10.500px;color:#000;flex:none}
  main{height:761px;display:flex}.d{flex:1;display:flex;align-items:center;justify-content:center;color:#444}
  footer{flex:1;background:#f0f0f0;padding:9px 0 0 1221px}button{display:flex;align-items:center;justify-content:center;width:91.500px;height:28px;padding:0;border:1.300px solid #2b86d0;border-radius:4px;background:#fdfdfd;font:inherit;color:#000}`,
  `<header><ui-icon n="fusion" s=".66"></ui-icon><ui-label w="109" style="margin-left:7px">スクリプトとアドイン</ui-label><ui-icon n="x" g="1153.500"></ui-icon></header>
   <main><filter-pane></filter-pane><script-table></script-table><div class="d"><ui-label w="266">項目を選択すると、ここに詳細が表示されます</ui-label></div></main>
   <footer><button><ui-label w="36">閉じる</ui-label></button></footer>`);

define('ink-mark', ':host{width:360px;height:110px}svg{display:block}',
  `<svg width="360" height="110" viewBox="485 130 360 110"><path d="M495.700 207.500Q497 203 504.500 200 516 195 531 191.700L547 176.700 566 175 602 168 619 166 635 161 660 160 702 160Q712 151 721 149.300L741 148.300 762 146 772 147.300 798 163.300 819 176.700 831 193.300Q835 199 834 203L826 216.700 782 217.700 755.500 224 741 219.300 715 213.300 672 211.700 643 205 615 205.700 582 208.300 557.500 211.700 506.500 213.500Q497 211 495.700 207.500z" fill="none" stroke="#0078d7" stroke-width="12.500" stroke-linejoin="round"/></svg>`);

define('fusion-app', `:host{display:flex;flex-direction:column;width:1920px;height:1080px;position:relative;overflow:hidden}
  script-dialog{position:absolute;left:285px;top:68px}ink-mark{position:absolute;left:485px;top:130px}task-bar{position:relative;flex:none}`,
  `<title-bar></title-bar><quick-bar></quick-bar><ribbon-bar></ribbon-bar><model-canvas></model-canvas><time-line></time-line>
   <script-dialog></script-dialog><task-bar></task-bar><ink-mark></ink-mark>`);
</script>
</body>
</html>
